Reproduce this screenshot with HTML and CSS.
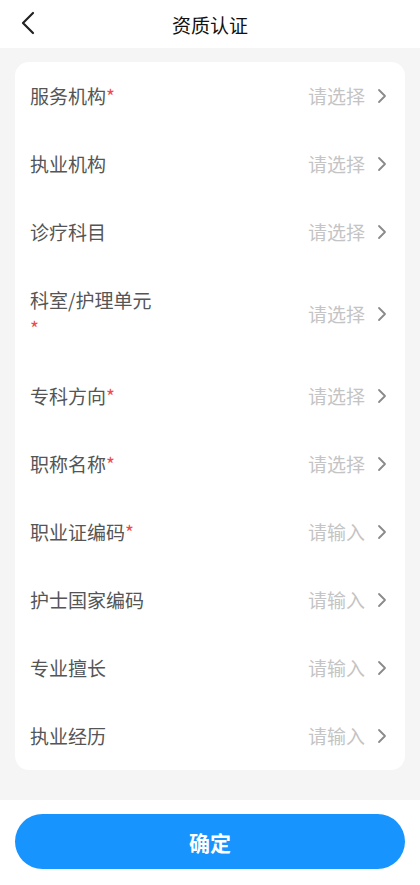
FILE: index.html
```html
<!DOCTYPE html>
<html lang="zh-CN">
<head>
  <meta charset="UTF-8">
  <meta name="viewport" content="width=device-width, initial-scale=1.0">
  <title>资质认证</title>
  <link rel="stylesheet" href="styles.css">
</head>
<body>

  <!-- ナビ -->
  <div class="nav">
    <span class="back">
      <svg width="16" height="24" viewBox="0 0 16 24"><path d="M13 2 L3 12 L13 22" fill="none" stroke="#222" stroke-width="2.2" stroke-linecap="round" stroke-linejoin="round"/></svg>
    </span>
    <h1 class="nav-title">资质认证</h1>
  </div>

  <div class="main">
    <div class="card">
      <div class="row"><div class="label">服务机构<i>*</i></div><div class="value">请选择<svg class="arrow" viewBox="0 0 10 16"><path d="M2 2 L8 8 L2 14"/></svg></div></div>
      <div class="row"><div class="label">执业机构</div><div class="value">请选择<svg class="arrow" viewBox="0 0 10 16"><path d="M2 2 L8 8 L2 14"/></svg></div></div>
      <div class="row"><div class="label">诊疗科目</div><div class="value">请选择<svg class="arrow" viewBox="0 0 10 16"><path d="M2 2 L8 8 L2 14"/></svg></div></div>
      <div class="row"><div class="label narrow">科室/护理单元<i>*</i></div><div class="value">请选择<svg class="arrow" viewBox="0 0 10 16"><path d="M2 2 L8 8 L2 14"/></svg></div></div>
      <div class="row"><div class="label">专科方向<i>*</i></div><div class="value">请选择<svg class="arrow" viewBox="0 0 10 16"><path d="M2 2 L8 8 L2 14"/></svg></div></div>
      <div class="row"><div class="label">职称名称<i>*</i></div><div class="value">请选择<svg class="arrow" viewBox="0 0 10 16"><path d="M2 2 L8 8 L2 14"/></svg></div></div>
      <div class="row"><div class="label">职业证编码<i>*</i></div><div class="value">请输入<svg class="arrow" viewBox="0 0 10 16"><path d="M2 2 L8 8 L2 14"/></svg></div></div>
      <div class="row"><div class="label">护士国家编码</div><div class="value">请输入<svg class="arrow" viewBox="0 0 10 16"><path d="M2 2 L8 8 L2 14"/></svg></div></div>
      <div class="row"><div class="label">专业擅长</div><div class="value">请输入<svg class="arrow" viewBox="0 0 10 16"><path d="M2 2 L8 8 L2 14"/></svg></div></div>
      <div class="row"><div class="label">执业经历</div><div class="value">请输入<svg class="arrow" viewBox="0 0 10 16"><path d="M2 2 L8 8 L2 14"/></svg></div></div>
    </div>
  </div>

  <div class="footer">
    <button class="submit">确定</button>
  </div>

</body>
</html>
```

FILE: styles.css
```css
body {
  margin: 0;
  padding: 0;
  height: 100vh;
  overflow: hidden;
  font-family: "Noto Sans CJK SC", "Noto Sans", sans-serif;
  background: #fff;
  display: flex;
  flex-direction: column;
}

/* ナビ */
.nav {
  height: 48px;
  display: flex;
  align-items: center;
  justify-content: center;
  position: relative;
  background: #fff;
}

.back {
  position: absolute;
  left: 20px;
  top: 11px;
  display: flex;
}

.nav-title {
  margin: 0;
  font-size: 19px;
  font-weight: 400;
  color: #111;
}

/* 本体 */
.main {
  background: #f5f5f5;
  padding: 14px 15px 30px;
}

.card {
  background: #fff;
  border-radius: 14px;
}

.row {
  display: flex;
  align-items: center;
  justify-content: space-between;
  padding: 20px 18px 20px 15px;
  line-height: 28px;
}

.label {
  font-size: 19px;
  color: #555;
}

.label.narrow {
  width: 126px;
}

.label i {
  font-style: normal;
  color: #f04b4b;
}

.value {
  display: flex;
  align-items: center;
  font-size: 19px;
  color: #c4c4c4;
}

.arrow {
  width: 10px;
  height: 16px;
  margin-left: 12px;
  fill: none;
  stroke: #8a8a8a;
  stroke-width: 1.8;
  stroke-linecap: round;
  stroke-linejoin: round;
}

/* ボタン */
.footer {
  flex: 1;
  background: #fff;
  padding: 14px 15px 0;
}

.submit {
  width: 100%;
  height: 55px;
  border: none;
  border-radius: 28px;
  background: #1894ff;
  color: #fff;
  font-family: "Noto Sans CJK SC", sans-serif;
  font-size: 21px;
  font-weight: bold;
}
```
